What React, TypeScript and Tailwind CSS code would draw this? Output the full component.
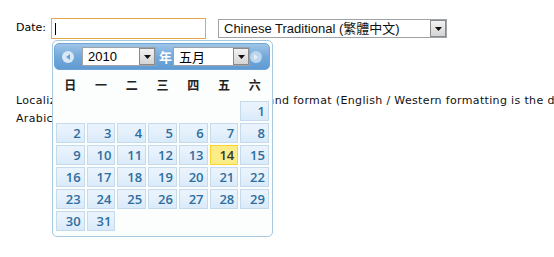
import React from "react";

const WEEKDAYS = ["日", "一", "二", "三", "四", "五", "六"];
const TODAY = 14;
const FIRST_OFFSET = 6; // May 2010 starts on Saturday

const FakeSelect = ({
  label,
  className,
  textClass,
}: {
  label: string;
  className: string;
  textClass?: string;
}) => (
  <div
    className={`flex items-center bg-white border border-[#9ea3a8] ${className}`}
  >
    <span className={`flex-1 pl-[5px] whitespace-nowrap overflow-hidden ${textClass ?? ""}`}>
      {label}
    </span>
    <span className="flex items-center justify-center w-[16px] h-full border border-[#8a8a8a] bg-[linear-gradient(to_bottom,#f2f2f2,#d4d4d4)]">
      <svg width="7" height="4" viewBox="0 0 7 4">
        <path d="M0 0h7L3.5 4z" fill="#111" />
      </svg>
    </span>
  </div>
);

const NavCircle = ({ dir, faded }: { dir: "prev" | "next"; faded?: boolean }) => (
  <span
    className={`flex items-center justify-center w-[12px] h-[12px] rounded-full shrink-0 ${
      faded ? "bg-[#bcd6ee]" : "bg-[#d9e8f5]"
    }`}
  >
    <svg width="4" height="6" viewBox="0 0 4 6">
      {dir === "prev" ? (
        <path d="M4 0v6L0 3z" fill={faded ? "#e6f0f9" : "#6b9fcf"} />
      ) : (
        <path d="M0 0v6l4-3z" fill={faded ? "#e6f0f9" : "#8db5dc"} />
      )}
    </svg>
  </span>
);

const App = () => {
  const cells: (number | null)[] = [
    ...Array(FIRST_OFFSET).fill(null),
    ...Array.from({ length: 31 }, (_, i) => i + 1),
  ];

  return (
    <div className="relative w-[554px] h-[257px] overflow-hidden bg-white font-['DejaVu_Sans',sans-serif] text-[11px] text-black">
      <div className="flex items-center pl-[16px] pt-[18px]">
        <span className="w-[35px]">Date:</span>
        <div className="relative w-[155px] h-[21px] border border-[#e2a94c] bg-white">
          <span className="absolute left-[3px] top-[4px] w-px h-[12px] bg-black" />
        </div>
        <FakeSelect
          label="Chinese Traditional (繁體中文)"
          className="ml-[12px] w-[229px] h-[19px]"
          textClass="font-['Liberation_Sans','Noto_Sans_CJK_TC',sans-serif] text-[13px] text-[#111]"
        />
      </div>

      <div className="pl-[16px] pt-[53px] leading-[18px] tracking-[0.35px] text-[#111]">
        <p className="whitespace-nowrap">
          Localize the datepicker calendar language and format (English / Western formatting is
          the default).
        </p>
        <p className="whitespace-nowrap">Arabic and Hebrew.</p>
      </div>

      <div className="absolute left-[52px] top-[40px] w-[221px] h-[197px] rounded-[5px] border border-[#a6c9e2] bg-[#fcfdfd] p-[2px] pl-[1px]">
        <div className="flex items-center h-[27px] rounded-[5px] border border-[#6fa6d8] bg-[linear-gradient(to_bottom,#9fc5e8,#74a9da_50%,#5f9bd2)] pl-[7px]">
          <NavCircle dir="prev" />
          <FakeSelect
            label="2010"
            className="ml-[8px] w-[74px] h-[19px]"
            textClass="font-['Liberation_Sans',sans-serif] text-[13px]"
          />
          <span className="ml-[3px] w-[14px] font-['Noto_Sans_CJK_TC',sans-serif] font-bold text-[13px] text-white">
            年
          </span>
          <FakeSelect
            label="五月"
            className="w-[77px] h-[19px]"
            textClass="font-['Noto_Sans_CJK_TC',sans-serif] text-[13px]"
          />
          <NavCircle dir="next" faded />
        </div>

        <div className="grid grid-cols-7 gap-x-[2px] pl-[2px] pr-[1px] mt-[2px] h-[25px] items-center font-['Noto_Sans_CJK_TC',sans-serif] font-bold text-[12px] text-[#222]">
          {WEEKDAYS.map((d) => (
            <span key={d} className="text-center">
              {d}
            </span>
          ))}
        </div>

        <div className="grid grid-cols-7 gap-[2px] pl-[2px] pr-[1px] mt-[4px] font-['Open_Sans',sans-serif] font-semibold text-[13px]">
          {cells.map((day, i) =>
            day === null ? (
              <span key={`e${i}`} className="h-[20px]" />
            ) : (
              <span
                key={day}
                className={`flex items-center justify-end h-[20px] pr-[3px] border leading-none ${
                  day === TODAY
                    ? "border-[#fad42e] bg-[#fbec88] text-[#363636]"
                    : "border-[#c5dbec] bg-[linear-gradient(to_bottom,#ebf4fd,#e4f0fc_50%,#d9eafa)] text-[#2e6e9e]"
                }`}
              >
                {day}
              </span>
            )
          )}
        </div>
      </div>
    </div>
  );
};

export default App;
